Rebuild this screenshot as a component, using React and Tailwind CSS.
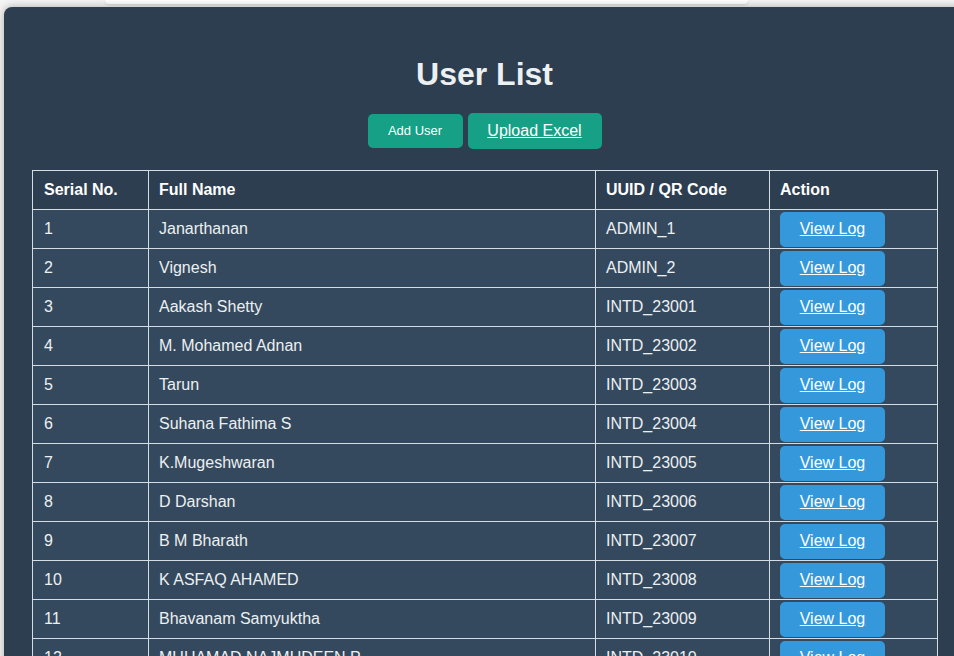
import React from "react";

const users = [
  ["1", "Janarthanan", "ADMIN_1"],
  ["2", "Vignesh", "ADMIN_2"],
  ["3", "Aakash Shetty", "INTD_23001"],
  ["4", "M. Mohamed Adnan", "INTD_23002"],
  ["5", "Tarun", "INTD_23003"],
  ["6", "Suhana Fathima S", "INTD_23004"],
  ["7", "K.Mugeshwaran", "INTD_23005"],
  ["8", "D Darshan", "INTD_23006"],
  ["9", "B M Bharath", "INTD_23007"],
  ["10", "K ASFAQ AHAMED", "INTD_23008"],
  ["11", "Bhavanam Samyuktha", "INTD_23009"],
  ["12", "MUHAMAD NAJMUDEEN P", "INTD_23010"],
  ["13", "Priya R", "INTD_23011"],
];

const UserList = () => {
  return (
    <div className="h-[656px] w-[954px] overflow-hidden bg-[#f4f4f4] font-['Liberation_Sans',Arial,sans-serif]">
      {/* top card peeking from above */}
      <div className="ml-[105px] h-[4px] w-[643px] rounded-b-lg bg-white shadow-[0_1px_3px_rgba(0,0,0,0.12)]"></div>

      <div className="ml-[4px] mt-[3px] w-[961px] rounded-lg bg-[#2c3e50] px-[28px] pt-[49px] pb-10 text-white shadow-[0_0_8px_rgba(0,0,0,0.3)]">
        <h1 className="text-center text-[32px] font-bold leading-[37px] text-[#ecf0f1]">
          User List
        </h1>

        <div className="mt-[20px] flex items-center justify-center gap-[5px]">
          <button className="h-[34px] w-[95px] rounded-[5px] bg-[#16a085] text-[13px] text-white">
            Add User
          </button>
          <button className="h-[36px] w-[134px] rounded-[5px] bg-[#16a085] text-[16px] text-white underline">
            Upload Excel
          </button>
        </div>

        <table className="mt-[21px] w-[905px] table-fixed border-collapse text-[16px]">
          <colgroup>
            <col className="w-[116px]" />
            <col className="w-[447px]" />
            <col className="w-[174px]" />
            <col className="w-[168px]" />
          </colgroup>
          <thead>
            <tr className="h-[39px] bg-[#2c3e50] text-left font-bold">
              <th className="border border-[#d5dde4] px-[11px]">Serial No.</th>
              <th className="border border-[#d5dde4] px-[10px]">Full Name</th>
              <th className="border border-[#d5dde4] px-[10px]">UUID / QR Code</th>
              <th className="border border-[#d5dde4] px-[10px]">Action</th>
            </tr>
          </thead>
          <tbody>
            {users.map(([n, name, id]) => (
              <tr key={n} className="h-[39px] bg-[#34495e] text-[#ecf0f1]">
                <td className="border border-[#d5dde4] px-[11px]">{n}</td>
                <td className="border border-[#d5dde4] px-[10px]">{name}</td>
                <td className="border border-[#d5dde4] px-[10px]">{id}</td>
                <td className="border border-[#d5dde4] px-[10px] py-0">
                  <button className="h-[35px] w-[105px] rounded-[5px] bg-[#3498db] text-[16px] text-white underline">
                    View Log
                  </button>
                </td>
              </tr>
            ))}
          </tbody>
        </table>
      </div>
    </div>
  );
};

export default UserList;
